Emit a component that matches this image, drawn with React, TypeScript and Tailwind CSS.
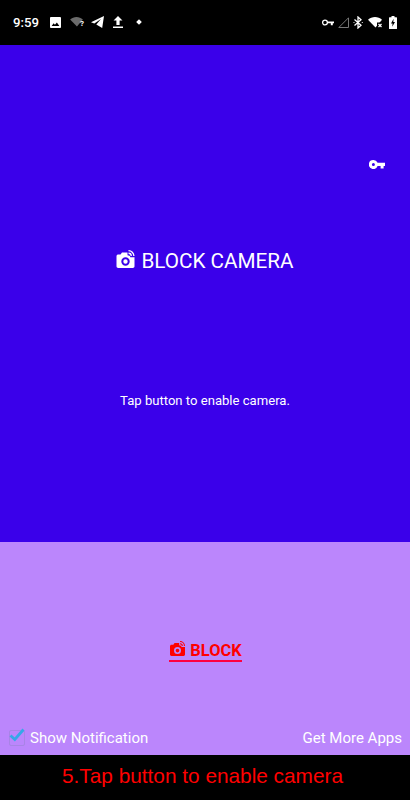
import React from 'react';

const font = { fontFamily: 'Roboto, sans-serif' };

function KeyIcon({ className }: { className?: string }) {
  return (
    <svg viewBox="0 0 16 9" className={className} fill="currentColor">
      <path fillRule="evenodd" d="M4.400 0a4.500 4.500 0 0 1 4.200 2.800H16v3.200h-1.400v2.600h-3V6H8.600A4.500 4.500 0 1 1 4.400 0zm0 3a1.500 1.500 0 1 0 0 3 1.500 1.500 0 0 0 0-3z" />
    </svg>
  );
}

function CameraIcon({ className }: { className?: string }) {
  return (
    <svg viewBox="0 0 18 18" className={className} fill="currentColor">
      <path
        fillRule="evenodd"
        d="M5.500 2.500h5.500v2.700c1.500.1 2.700.6 2.800 2H18v9.100c0 .9-.7 1.700-1.700 1.700H1.700C.8 18 0 17.200 0 16.300V6.200c0-.9.800-1.700 1.700-1.700h2.300L5.500 2.500zM9 7.300a4.200 4.200 0 1 0 0 8.400 4.200 4.200 0 0 0 0-8.400zm0 2a2.200 2.200 0 1 1 0 4.400 2.200 2.200 0 0 1 0-4.400z"
      />
      <path d="M12 0a6 6 0 0 1 6 6h-1.300A4.700 4.700 0 0 0 12 1.300V0zM12 2.600A3.400 3.400 0 0 1 15.400 6h-1.300A2.100 2.100 0 0 0 12 3.900V2.600z" />
    </svg>
  );
}

function StatusBar() {
  return (
    <div className="h-[45px] bg-black text-white flex items-center justify-between pl-[13px] pr-[13px] shrink-0">
      <div className="flex items-center">
        <span className="text-[13.200px] font-medium leading-none mr-[11px]">9:59</span>
        {/* gallery */}
        <svg viewBox="0 0 12 12" className="w-[11px] h-[11px] mr-[9px]" fill="currentColor">
          <path fillRule="evenodd" d="M1 0h10a1 1 0 0 1 1 1v10a1 1 0 0 1-1 1H1a1 1 0 0 1-1-1V1a1 1 0 0 1 1-1zm.8 9.800h8.400L7.500 6 5.400 8.400 4 6.800 1.800 9.800z" />
        </svg>
        {/* wifi unknown */}
        <svg viewBox="0 0 14 11" className="w-[13px] h-[10px]">
          <path d="M0 2.800C3.800-.9 10.200-.9 14 2.800L7.500 10.500z" fill="#6b6b6b" />
        </svg>
        <span className="text-[8px] font-bold leading-none mt-[4px] -ml-[3px] mr-[7px] w-[4px]">?</span>
        {/* telegram */}
        <svg viewBox="0 0 13 12" className="w-[13px] h-[12px] mr-[9px]" fill="currentColor">
          <path d="M13 0 0 6.200l3.300 1.300L10 3 5.300 8.400 11.200 12z" />
        </svg>
        {/* upload */}
        <svg viewBox="0 0 10 12" className="w-[10px] h-[12px] mr-[14px]" fill="currentColor">
          <path d="M5 0 9.500 4.600H6.600V9H3.400V4.600H.5zM0 10.600h10V12H0z" />
        </svg>
        <span className="w-[4px] h-[4px] rotate-45 bg-white" />
      </div>
      <div className="flex items-center">
        <svg viewBox="0 0 12 7" className="w-[12px] h-[7px] mr-[4px]" fill="none" stroke="#fff" strokeWidth="1.300">
          <circle cx="3" cy="3.500" r="2.400" />
          <path d="M5.400 2.500h6.600v1.700h-1.200v2H8.800v-2H5.400z" fill="#fff" stroke="none" />
        </svg>
        <svg viewBox="0 0 11 11" className="w-[11px] h-[11px] mr-[4px]" fill="none" stroke="#777" strokeWidth="1">
          <path d="M.8 10.500 10.500.8v9.700z" />
        </svg>
        <svg viewBox="0 0 10 13" className="w-[10px] h-[13px] mr-[5px]" fill="none" stroke="currentColor" strokeWidth="1.300">
          <path d="M1.500 3.500 8 9.300 5 12V1L8 3.700 1.500 9.500" />
          <circle cx="1" cy="6.500" r=".6" fill="#fff" stroke="none" />
          <circle cx="9.300" cy="6.500" r=".6" fill="#fff" stroke="none" />
        </svg>
        <svg viewBox="0 0 16 11" className="w-[16px] h-[11px] mr-[5px]">
          <path d="M0 2.800C3.800-.9 10.200-.9 14 2.800L7.500 10.500z" fill="#fff" />
          <path d="M9 5.500h7V11H9z" fill="#000" />
          <path d="M10.500 7l3 3m0-3-3 3" stroke="#fff" strokeWidth="1.200" />
        </svg>
        <svg viewBox="0 0 8 13" className="w-[8px] h-[13px]">
          <path d="M2.500 0h3v1.200H7.400a.6.6 0 0 1 .6.600v10.600a.6.600 0 0 1-.6.600H.6a.6.600 0 0 1-.6-.600V1.800a.6.600 0 0 1 .6-.600h1.900z" fill="#fff" />
          <path d="M4.600 2.800 2 7.400h1.600L3.200 10.800 6 6H4.300z" fill="#000" />
        </svg>
      </div>
    </div>
  );
}

export default function App() {
  return (
    <div className="w-[410px] h-[800px] flex flex-col overflow-hidden" style={font}>
      <StatusBar />

      <div className="h-[497px] bg-[#3a00ea] text-white flex flex-col shrink-0">
        <div className="flex justify-end pr-[25px] pt-[115px] h-[126px]">
          <KeyIcon className="w-[16px] h-[9px] text-white" />
        </div>
        <div className="flex items-center justify-center gap-[6px] mt-[75px] h-[30px]">
          <CameraIcon className="w-[19px] h-[18px] -mt-[4px] text-white" />
          <span className="text-[20.700px] leading-none">BLOCK CAMERA</span>
        </div>
        <p className="text-[13.100px] leading-none text-center mt-[118px]">Tap button to enable camera.</p>
      </div>

      <div className="h-[213px] bg-[#bb86fc] flex flex-col shrink-0">
        <div className="flex justify-center mt-[98px] pl-[1px]">
          <div className="flex items-end gap-[5px] border-b-2 border-[#ff0040] pb-[1px] text-[#ff0000] h-[22px] pl-[1px]">
            <CameraIcon className="w-[15px] h-[15px] mb-[3px]" />
            <span className="text-[16.400px] font-bold leading-none">BLOCK</span>
          </div>
        </div>
        <div className="flex items-center justify-between mt-auto pb-[9px] pl-[9px] pr-[8px] text-white text-[15px] leading-none">
          <div className="flex items-center">
            <div className="relative w-[16px] h-[16px] border border-[#a884e6] rounded-[2px] mr-[5px]">
              <svg viewBox="0 0 16 14" className="absolute -top-[3px] -left-[1px] w-[16px] h-[14px]" fill="none" stroke="#35a7e8" strokeWidth="2.800">
                <path d="M1.500 7.500 5.800 11.500 14.500 1.500" />
              </svg>
            </div>
            <span>Show Notification</span>
          </div>
          <span>Get More Apps</span>
        </div>
      </div>

      <div className="flex-1 bg-black flex items-center justify-center pb-[3px] pr-[5px]">
        <span className="text-[20.800px] leading-none text-[#ff0000]" style={{ fontFamily: '"Liberation Sans", Arial, sans-serif' }}>
          5.Tap button to enable camera
        </span>
      </div>
    </div>
  );
}
